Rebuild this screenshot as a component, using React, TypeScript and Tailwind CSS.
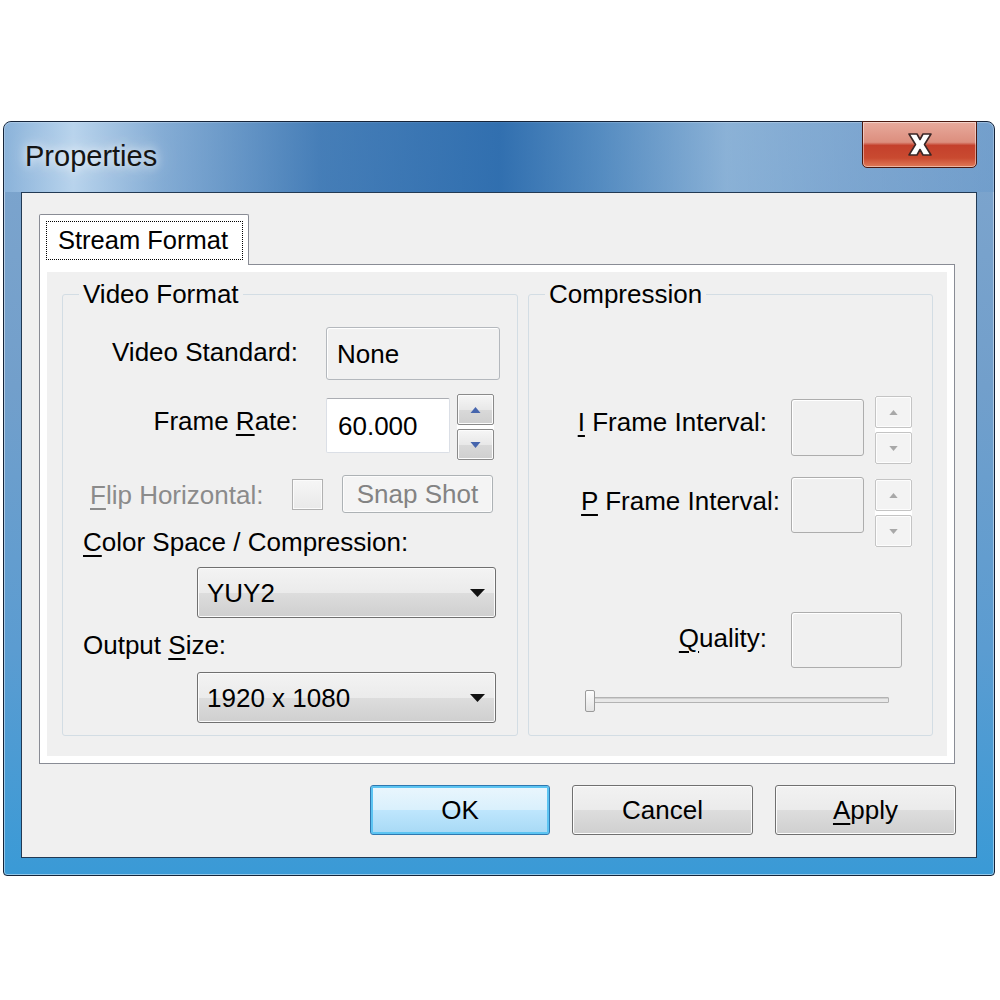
import React from "react";

function U({ children }: { children: React.ReactNode }) {
  return <span className="underline decoration-[1.5px] underline-offset-[4px]">{children}</span>;
}

function Spin({ dir, enabled, h }: { dir: "up" | "down"; enabled: boolean; h: string }) {
  const cls = enabled
    ? "border-[#8a8a8a] bg-[linear-gradient(180deg,#f6f6f6_0%,#e8e8e8_50%,#d9d9d9_51%,#cfcfcf_100%)] shadow-[inset_0_0_0_1px_#fcfcfc]"
    : "border-[#c4c4c4] bg-[#f3f3f3] shadow-[inset_0_0_0_1px_#fdfdfd]";
  return (
    <div className={`${h} w-full rounded-[2px] border flex items-center justify-center ${cls}`}>
      <svg width={enabled ? 11 : 9} height={enabled ? 6 : 5} viewBox="0 0 10 6">
        <path d={dir === "up" ? "M0 6 L5 0 L10 6 Z" : "M0 0 L5 6 L10 0 Z"} fill={enabled ? "#4665ad" : "#a8a8a8"} />
      </svg>
    </div>
  );
}

function Combo({ text }: { text: string }) {
  return (
    <div className="ml-[134px] w-[299px] h-[51px] rounded-[3px] border border-[#707070] bg-[linear-gradient(180deg,#f3f3f3_0%,#ebebeb_50%,#dddddd_51%,#cfcfcf_100%)] shadow-[inset_0_0_0_1px_#fbfbfb] flex items-center justify-between pl-[9px] pr-[10px]">
      <span>{text}</span>
      <svg width="15" height="8" viewBox="0 0 15 8">
        <path d="M0 0 H15 L7.5 8 Z" fill="#111" />
      </svg>
    </div>
  );
}

function DisabledBox({ w, h }: { w: string; h: string }) {
  return (
    <div className={`${w} ${h} rounded-[3px] border border-[#adadad] bg-[#f0f0f0] shadow-[inset_1px_1px_0_#ffffff]`} />
  );
}

export default function App() {
  return (
    <div className="w-[1000px] h-[1000px] bg-white pt-[121px] pl-[3px] font-['Liberation_Sans',Arial,sans-serif] text-[26px] text-black leading-none">
      <div className="w-[992px] h-[755px] border border-[#15243a] rounded-t-[8px] rounded-b-[4px] flex flex-col px-[17px] pb-[17px] bg-[linear-gradient(180deg,#7ea5cd_0%,#729fcb_35%,#5b9cd1_70%,#3a9ad6_100%)] shadow-[inset_0_0_0_1px_rgba(255,255,255,0.45)]">
        {/* title bar */}
        <div className="-mx-[17px] px-[17px] h-[70px] shrink-0 rounded-t-[7px] flex items-start justify-between bg-[linear-gradient(90deg,rgba(150,190,228,0.55)_0%,rgba(195,220,242,0.85)_7%,rgba(140,180,220,0.5)_16%,rgba(40,105,172,0.65)_32%,rgba(30,98,168,0.8)_50%,rgba(50,118,182,0.55)_60%,rgba(150,188,222,0.55)_73%,rgba(125,168,212,0.45)_86%,rgba(95,148,202,0.35)_100%)]">
          <div className="ml-[4px] mt-[20px] text-[29px] text-[#141414] [text-shadow:0_0_10px_rgba(255,255,255,0.95),0_0_22px_rgba(255,255,255,0.7)]">
            Properties
          </div>
          <div className="-mt-px w-[115px] h-[47px] rounded-b-[5px] border border-[#4a1810] bg-[linear-gradient(180deg,#e7aa9c_0%,#dc8e7e_45%,#c4402c_52%,#c94a30_80%,#e07a58_100%)] shadow-[inset_0_0_0_1px_rgba(255,255,255,0.45)] flex items-center justify-center">
            <svg width="26" height="25" viewBox="0 0 26 25">
              <path
                d="M2 2 H10 L13 7.5 L16 2 H24 L17.5 12.5 L24 23 H16 L13 17.5 L10 23 H2 L8.5 12.5 Z"
                fill="#ffffff"
                stroke="#3a2626"
                strokeWidth="1.6"
                strokeLinejoin="round"
              />
            </svg>
          </div>
        </div>

        {/* client area */}
        <div className="flex-1 border border-[#223a54] bg-[#f0f0f0] flex flex-col">
          {/* tab control */}
          <div className="ml-[17px] mt-[21px] w-[916px] flex flex-col">
            <div className="flex">
              <div className="relative z-10 -mb-px w-[210px] h-[51px] border-x border-t border-[#898c95] rounded-t-[2px] bg-white">
                <div className="ml-[6px] mt-[6px] w-[197px] h-[39px] border border-dotted border-black flex items-center pl-[11px] text-[25.5px]">
                  Stream Format
                </div>
              </div>
            </div>
            <div className="h-[500px] border border-[#898c95] bg-white p-[7px]">
              <div className="h-full bg-[#f0f0f0] flex gap-[10px] pl-[15px] pt-[7px]">
                {/* Video Format group */}
                <fieldset className="w-[456px] h-[457px] border border-[#d3dde4] rounded-[3px]">
                  <legend className="ml-[16px] px-[4px] leading-[30px]">Video Format</legend>
                  <div className="flex flex-col">
                    <div className="mt-[18px] flex items-start h-[53px]">
                      <div className="mt-[12px] w-[235px] text-right">Video Standard:</div>
                      <div className="ml-[28px] w-[174px] h-[53px] rounded-[3px] border border-[#b4b8bd] bg-[#f1f1f1] shadow-[inset_1px_1px_0_#ffffff] flex items-center pl-[10px]">
                        None
                      </div>
                    </div>
                    <div className="mt-[14px] flex items-start h-[66px]">
                      <div className="mt-[14px] w-[235px] text-right">
                        Frame <U>R</U>ate:
                      </div>
                      <div className="ml-[28px] mt-[4px] w-[124px] h-[55px] rounded-[2px] border border-[#dbdfe6] border-t-[#abadb3] bg-white flex items-center pl-[11px]">
                        60.000
                      </div>
                      <div className="ml-[7px] w-[37px] flex flex-col gap-[4px] bg-white">
                        <Spin dir="up" enabled h="h-[31px]" />
                        <Spin dir="down" enabled h="h-[31px]" />
                      </div>
                    </div>
                    <div className="mt-[15px] flex items-start h-[38px]">
                      <div className="mt-[7px] w-[229px] pl-[27px] text-[#8b8b8b]">
                        <U>F</U>lip Horizontal:
                      </div>
                      <div className="mt-[4px] w-[31px] h-[31px] border border-[#b1b1b1] bg-[linear-gradient(180deg,#f6f6f6,#e9e9e9)] shadow-[inset_0_0_0_1px_#fbfbfb]" />
                      <div className="ml-[19px] w-[151px] h-[38px] rounded-[3px] border border-[#adb2b5] bg-[#f4f4f4] shadow-[inset_0_0_0_1px_#fcfcfc] flex items-center justify-center text-[#838383]">
                        Snap Shot
                      </div>
                    </div>
                    <div className="mt-[16px] ml-[20px] h-[26px]">
                      <U>C</U>olor Space / Compression:
                    </div>
                    <div className="mt-[12px]">
                      <Combo text="YUY2" />
                    </div>
                    <div className="mt-[14px] ml-[20px] h-[26px]">
                      Output <U>S</U>ize:
                    </div>
                    <div className="mt-[14px]">
                      <Combo text="1920 x 1080" />
                    </div>
                  </div>
                </fieldset>

                {/* Compression group */}
                <fieldset className="w-[405px] h-[457px] border border-[#d3dde4] rounded-[3px]">
                  <legend className="ml-[16px] px-[4px] leading-[30px]">Compression</legend>
                  <div className="flex flex-col">
                    <div className="mt-[87px] flex items-start h-[68px]">
                      <div className="mt-[13px] w-[238px] text-right">
                        <U>I</U> Frame Interval:
                      </div>
                      <div className="ml-[24px] mt-[3px]">
                        <DisabledBox w="w-[73px]" h="h-[57px]" />
                      </div>
                      <div className="ml-[11px] w-[37px] flex flex-col gap-[4px] bg-white">
                        <Spin dir="up" enabled={false} h="h-[32px]" />
                        <Spin dir="down" enabled={false} h="h-[32px]" />
                      </div>
                    </div>
                    <div className="mt-[13px] flex items-start h-[70px]">
                      <div className="mt-[11px] w-[251px] text-right">
                        <U>P</U> Frame Interval:
                      </div>
                      <div className="ml-[11px]">
                        <DisabledBox w="w-[73px]" h="h-[56px]" />
                      </div>
                      <div className="ml-[11px] mt-[2px] w-[37px] flex flex-col gap-[4px] bg-white">
                        <Spin dir="up" enabled={false} h="h-[32px]" />
                        <Spin dir="down" enabled={false} h="h-[32px]" />
                      </div>
                    </div>
                    <div className="mt-[65px] flex items-start h-[56px]">
                      <div className="mt-[13px] w-[238px] text-right">
                        <U>Q</U>uality:
                      </div>
                      <div className="ml-[24px]">
                        <DisabledBox w="w-[111px]" h="h-[56px]" />
                      </div>
                    </div>
                    <div className="relative mt-[22px] ml-[56px] w-[304px] h-[22px]">
                      <div className="ml-[2px] mt-[7px] h-[6px] rounded-[1px] border border-[#b3b3b3] bg-[#e8e8e8] shadow-[inset_0_1px_0_#d0d0d0]" />
                      <div className="absolute left-0 top-0 w-[10px] h-[22px] rounded-[2px] border border-[#9a9a9a] bg-[linear-gradient(180deg,#fdfdfd,#e4e4e4)]" />
                    </div>
                  </div>
                </fieldset>
              </div>
            </div>
          </div>

          {/* buttons */}
          <div className="mt-[21px] flex justify-end gap-[22px] pr-[20px]">
            <div className="w-[180px] h-[50px] rounded-[3px] border border-[#2f78b0] bg-[linear-gradient(180deg,#eaf6fd_0%,#d9f0fc_50%,#bee6fd_51%,#a7d9f5_100%)] shadow-[inset_0_0_0_2px_#5cc4f2] flex items-center justify-center">
              OK
            </div>
            <div className="w-[181px] h-[50px] rounded-[3px] border border-[#707070] bg-[linear-gradient(180deg,#f2f2f2_0%,#ebebeb_50%,#dddddd_51%,#cfcfcf_100%)] shadow-[inset_0_0_0_1px_#fcfcfc] flex items-center justify-center">
              Cancel
            </div>
            <div className="w-[181px] h-[50px] rounded-[3px] border border-[#707070] bg-[linear-gradient(180deg,#f2f2f2_0%,#ebebeb_50%,#dddddd_51%,#cfcfcf_100%)] shadow-[inset_0_0_0_1px_#fcfcfc] flex items-center justify-center">
              <span>
                <U>A</U>pply
              </span>
            </div>
          </div>
        </div>
      </div>
    </div>
  );
}
